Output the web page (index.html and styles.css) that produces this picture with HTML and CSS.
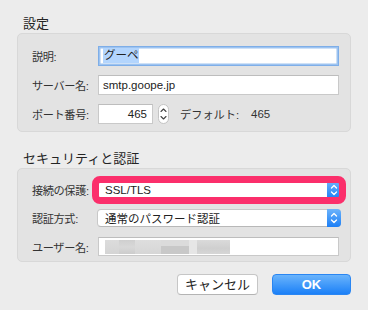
FILE: index.html
```html
<!DOCTYPE html>
<html lang="ja">
<head>
<meta charset="utf-8">
<link rel="stylesheet" href="styles.css">
</head>
<body>
<div class="dialog">
  <div class="section-title">設定</div>
  <div class="group g1">
    <div class="lbl">説明:</div>
    <div class="field focus"><span class="sel">グーペ</span></div>
    <div class="lbl">サーバー名:</div>
    <div class="field">smtp.goope.jp</div>
    <div class="lbl">ポート番号:</div>
    <div class="port-row">
      <div class="field port">465</div>
      <div class="stepper">
        <svg width="11" height="20" viewBox="0 0 11 20"><path d="M3 7.5 L5.5 5 L8 7.5 M3 12.5 L5.5 15 L8 12.5" fill="none" stroke="#444" stroke-width="1.1" stroke-linecap="round" stroke-linejoin="round"/></svg>
      </div>
      <span class="default">デフォルト:</span><span class="defval">465</span>
    </div>
  </div>

  <div class="section-title t2">セキュリティと認証</div>
  <div class="group g2">
    <div class="lbl">接続の保護:</div>
    <div class="popup marked">
      <span class="ptext">SSL/TLS</span>
      <span class="arrows"><svg width="14" height="18" viewBox="0 0 14 18"><path d="M4.5 7 L7 4.5 L9.5 7 M4.5 11 L7 13.5 L9.5 11" fill="none" stroke="#fff" stroke-width="1.3" stroke-linecap="round" stroke-linejoin="round"/></svg></span>
    </div>
    <div class="lbl">認証方式:</div>
    <div class="popup">
      <span class="ptext">通常のパスワード認証</span>
      <span class="arrows"><svg width="14" height="18" viewBox="0 0 14 18"><path d="M4.5 7 L7 4.5 L9.5 7 M4.5 11 L7 13.5 L9.5 11" fill="none" stroke="#fff" stroke-width="1.3" stroke-linecap="round" stroke-linejoin="round"/></svg></span>
    </div>
    <div class="lbl">ユーザー名:</div>
    <div class="field user">
      <span class="blur"><i class="b b1"></i><i class="b b2"></i><i class="b b3"></i><i class="b b4"></i><i class="b b5"></i><i class="b b6"></i></span>
    </div>
  </div>

  <div class="buttons">
    <button class="btn cancel">キャンセル</button>
    <button class="btn ok">OK</button>
  </div>
</div>
</body>
</html>
```

FILE: styles.css
```css
html, body {
  margin: 0;
  padding: 0;
  background: #ececec;
}
body {
  font-family: "Liberation Sans", "Noto Sans CJK JP", sans-serif;
  color: #2e2e2e;
  width: 368px;
  height: 310px;
  overflow: hidden;
}
.dialog {
  padding: 16px 17px 0 17px;
}
.section-title {
  font-size: 13px;
  line-height: 16px;
  height: 16px;
  padding-left: 6px;
  margin-bottom: 1px;
  color: #242424;
}
.section-title.t2 {
  margin-top: 19px;
}
.group {
  background: #e3e3e3;
  border: 1px solid #d8d8d8;
  border-radius: 5px;
  display: grid;
  grid-template-columns: 66px 1fr;
  align-items: center;
  padding: 12px 11px 7px 14px;
}
.g1 {
  row-gap: 9px;
  grid-auto-rows: 20px;
}
.g2 {
  row-gap: 10px;
  grid-template-rows: 18px 18px 19px;
  padding-bottom: 5px;
}
.lbl {
  font-size: 11.2px;
  letter-spacing: -0.4px;
  color: #333;
  white-space: nowrap;
}
.field {
  height: 20px;
  box-sizing: border-box;
  background: #fff;
  border: 1px solid #c9c9c9;
  border-top-color: #bdbdbd;
  font-size: 11.5px;
  line-height: 18px;
  padding: 0 4px;
  color: #222;
}
.field.focus {
  border-color: #7eaee8;
  box-shadow: inset 0 0 0 1.5px #9dc3f0;
  padding-left: 4px;
  line-height: 17px;
}
.sel {
  background: #b3d5fd;
  padding: 1px 0 2px 1px;
}
.port-row {
  display: flex;
  align-items: center;
  height: 20px;
}
.field.port {
  width: 55px;
  text-align: right;
  padding-right: 5px;
}
.stepper {
  width: 11px;
  height: 20px;
  margin-left: 5px;
  box-sizing: border-box;
  border: 1px solid #c4c4c4;
  border-radius: 6px;
  background: #fff;
  display: flex;
  align-items: center;
  justify-content: center;
}
.stepper svg {
  display: block;
  flex: none;
}
.default {
  font-size: 11.2px;
  margin-left: 11px;
  color: #333;
}
.defval {
  font-size: 11.5px;
  margin-left: 12px;
  color: #333;
}
.popup {
  height: 18px;
  box-sizing: border-box;
  background: #fff;
  border: 1px solid #c8c8c8;
  border-bottom-color: #b8b8b8;
  border-radius: 4px;
  display: flex;
  align-items: center;
  justify-content: space-between;
  margin-left: -1px;
  margin-right: -2px;
  font-size: 11.5px;
  color: #222;
}
.ptext {
  padding-left: 7px;
}
.arrows {
  width: 14px;
  height: 18px;
  margin: -1px -1px -1px 0;
  border-radius: 0 4px 4px 0;
  background: linear-gradient(#6cb3fb, #1c7ff6);
  display: flex;
  align-items: center;
  justify-content: center;
}
.arrows svg {
  display: block;
}
.popup.marked {
  outline: 7px solid #fb2f6b;
  outline-offset: -2px;
  border-radius: 3px;
}
.field.user {
  height: 19px;
  display: flex;
  align-items: center;
  padding: 0 0 0 6px;
}
.blur {
  display: flex;
  height: 14px;
}
.b {
  display: block;
  height: 14px;
}
.b1 { width: 14px; background: linear-gradient(#dcdcdc, #d4d4d4); }
.b2 { width: 16px; background: linear-gradient(#cfcfcf, #d8d8d8 50%, #cccccc); }
.b3 { width: 26px; background: linear-gradient(#dedede, #d6d6d6); }
.b4 { width: 28px; background: linear-gradient(#dbdbdb 40%, #c8c8c8 40%); }
.b5 { width: 8px; background: #e6e6e6; }
.b6 { width: 33px; background: linear-gradient(#dadada, #cfcfcf 60%, #d6d6d6); }
.buttons {
  display: flex;
  justify-content: flex-end;
  gap: 14px;
  margin-top: 12px;
}
.btn {
  height: 21px;
  box-sizing: border-box;
  border-radius: 4px;
  font-family: "Liberation Sans", "Noto Sans CJK JP", sans-serif;
  font-size: 13px;
  padding: 0;
  line-height: 19px;
}
.cancel {
  width: 81px;
  background: #fff;
  border: 1px solid #c6c6c6;
  border-bottom-color: #b4b4b4;
  color: #222;
}
.ok {
  width: 79px;
  background: linear-gradient(#6ab4fc, #1b80f7);
  border: 1px solid #2a86f2;
  color: #fff;
  font-weight: bold;
}
```
